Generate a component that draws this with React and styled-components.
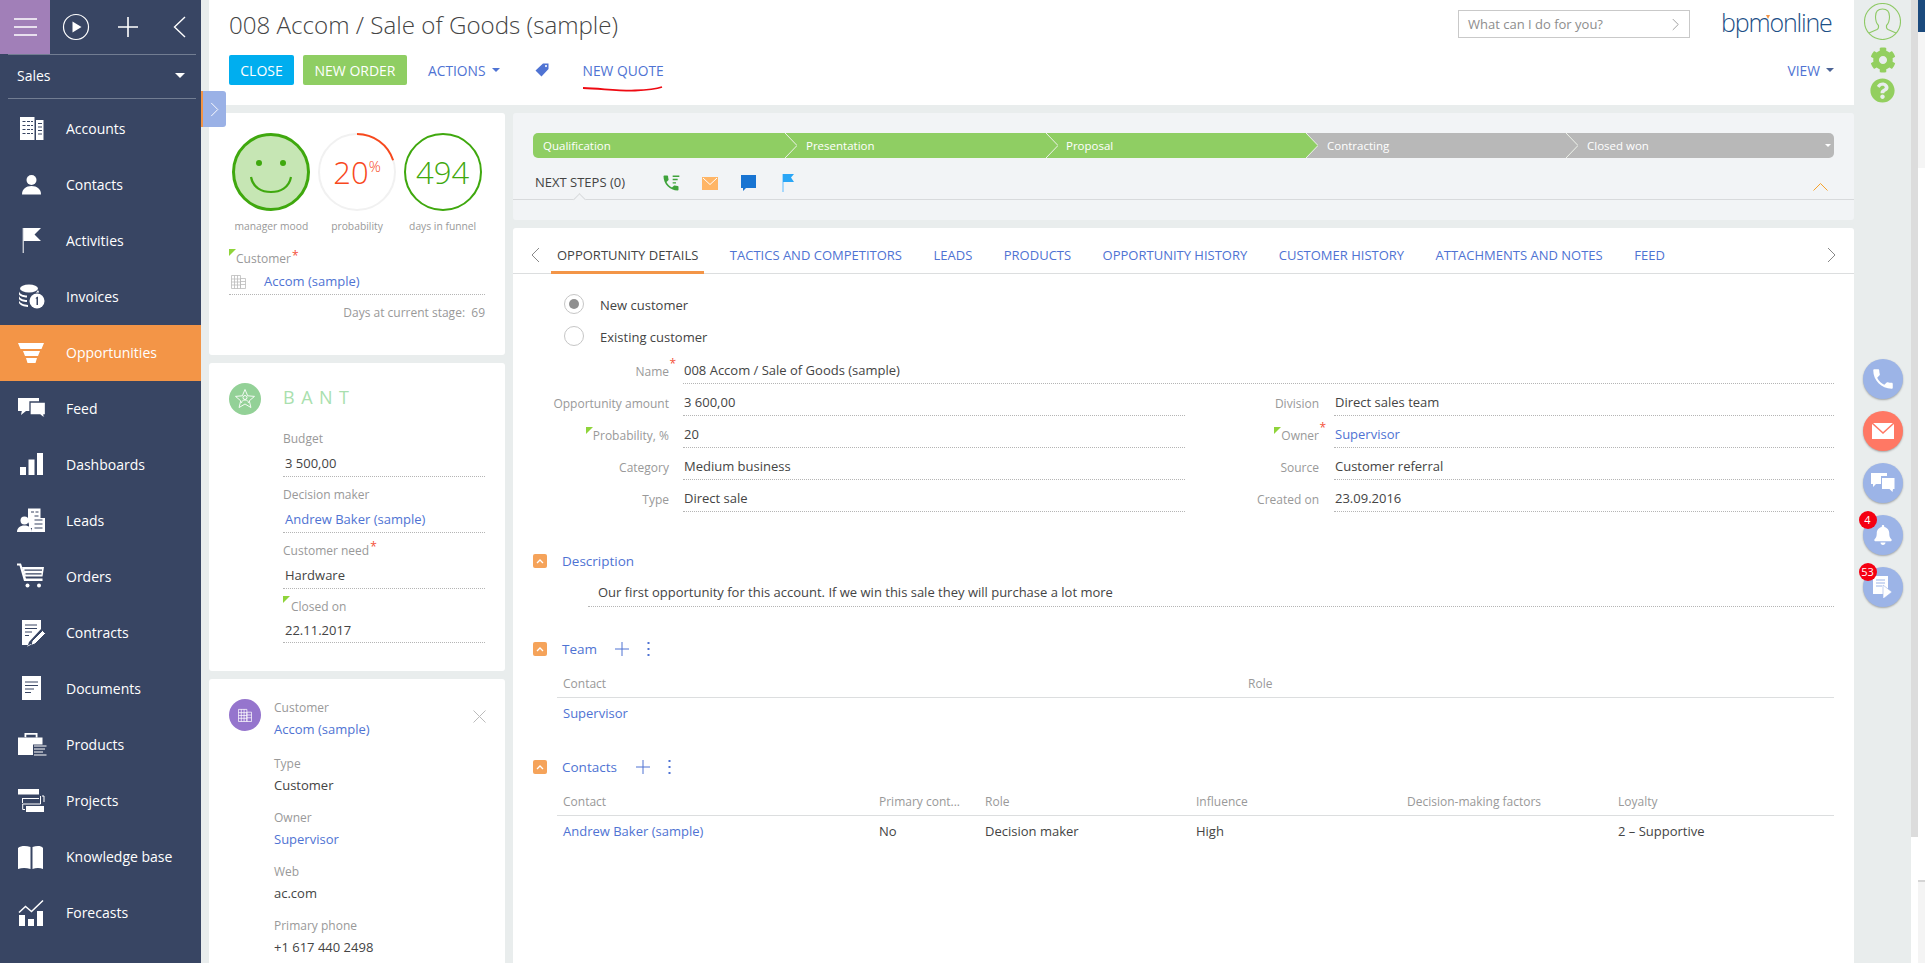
import React from "react";
import styled, { createGlobalStyle } from "styled-components";
import { FaCog, FaQuestionCircle, FaBell } from "react-icons/fa";

const Global = createGlobalStyle`
  html, body { margin: 0; padding: 0; background: #fff; overflow: hidden; }
  * { box-sizing: border-box; }
  body { font-family: "Open Sans", "Liberation Sans", sans-serif; font-size: 13px; color: #444; }
`;

const NAVY = "#384563";
const LINK = "#4f73d3";
const LABEL = "#999";
const DOTS = "1px dotted #b5b5b5";

const Page = styled.div`
  position: relative; display: flex; width: 1925px; height: 963px; overflow: hidden; background: #e9eded;
`;

/* ---------- sidebar ---------- */
const Sidebar = styled.aside`
  width: 201px; flex: none; background: ${NAVY}; color: #fff; display: flex; flex-direction: column;
`;
const TopTools = styled.div`
  height: 54px; display: flex; align-items: center;
`;
const MenuButton = styled.div`
  width: 50px; height: 54px; background: #a17fb8; display: flex; align-items: center; justify-content: center;
`;
const ToolIcons = styled.div`
  flex: 1; display: flex; align-items: center; padding-left: 12px;
`;
const PlusTool = styled.svg`
  margin: 0 35px 0 28px;
`;
const SectionSelect = styled.div`
  margin: 0 5px 0 8px; height: 45px; border-top: 1px solid #727d92; border-bottom: 1px solid #727d92;
  display: flex; align-items: center; justify-content: space-between; padding: 0 11px 2px 9px;
  font-size: 14px;
`;
const Caret = styled.span`
  display: inline-block; width: 0; height: 0;
  border-left: ${p => p.$s || 4}px solid transparent;
  border-right: ${p => p.$s || 4}px solid transparent;
  border-top: ${p => p.$s || 4}px solid ${p => p.$c || "#fff"};
`;
const Nav = styled.nav`
  margin-top: 2px;
`;
const NavItem = styled.div`
  height: 56px; display: flex; align-items: center; padding: 0 0 2px 17px; gap: 19px;
  font-size: 14px; background: ${p => (p.$active ? "#f39547" : "transparent")};
`;

const W = ({ children }) => (
  <svg width="30" height="30" viewBox="0 0 30 30" fill="#fff">{children}</svg>
);
const D = NAVY;
const navItems = [
  ["Accounts", <W><path d="M3 4h14.500v23H3z" /><path d="M19 7h7.500v20H19z" />
    <path d="M5.500 8.500h3M10 8.500h3M14 8.500h2M5.500 12.500h3M10 12.500h3M14 12.500h2M5.500 16.500h3M10 16.500h3M14 16.500h2M5.500 20.500h3M10 20.500h3M14 20.500h2M21 10.500h4M21 14h4M21 17.500h4M21 21h4" stroke={D} strokeWidth="1.200" /></W>],
  ["Contacts", <W><circle cx="14.500" cy="11" r="5" /><path d="M5 25.500c0-5.500 4-8.500 9.500-8.500S24 20 24 25.500z" /></W>],
  ["Activities", <W><path d="M5.700 3h1v25h-1z" /><path d="M6.500 3H24l-6.500 6.500L24 16H6.500z" /></W>],
  ["Invoices", <W><ellipse cx="12" cy="7.500" rx="9" ry="4" /><path d="M2 10.500c1 3 5 4 8 4v2c-3 0-7-1-8-3zM2 15c1 3 5 4 8 4v2c-3 0-7-1-8-3zM2 19.500c1 3 5 4 9 4.500v2c-4-.5-8-1.500-9-4zM21 9c.5 1 1 1.500 1 2.500-1 0-2 0-3 .5z" />
    <circle cx="20" cy="20" r="7.500" /><path d="M19 16.500l2-1v8.500h-1.500v-6.500l-.8.4z" fill={D} /></W>],
  ["Opportunities", <W><path d="M1 6h26l-2.500 6h-21zM6 14h17l-2 5H8zM9 21h11l-1.500 5h-8z" /></W>],
  ["Feed", <W><path d="M1 5h21v13H9l-5 4 .8-4H1z" /><path d="M13 9h15.500v13H27l.5 3.500-4.500-3.500H13z" stroke={D} strokeWidth="1.300" /></W>],
  ["Dashboards", <W><path d="M3 18h6v8H3zM11.500 10.500h6V26h-6zM20 4h6v22h-6z" /></W>],
  ["Leads", <W><path d="M11 3.500h12.500V13H28V27H15v-4h-3v-3a5 5 0 0 0-1-3z" /><path d="M14 7h3M18.500 7h3M17.500 11h4M17.500 15h8M17.500 19h8M17.500 23h8" stroke={D} strokeWidth="1.200" /><circle cx="7.500" cy="15.500" r="4" /><path d="M0 27c0-4 3-6.500 7.500-6.500S15 23 15 27z" /></W>],
  ["Orders", <W><path d="M0 2.500h4l5 15h16.500V20H7L2.500 4.500H0z" /><path d="M5 6h22l-1.500 9.500H8z" /><path d="M7.500 8.500h17.500v1.200H7.500zM8.500 12.200h16v1.200h-16z" fill={D} /><circle cx="10.500" cy="24.500" r="2" /><circle cx="22" cy="24.500" r="2" /></W>],
  ["Contracts", <W><path d="M5 3h19v9L12 25l-1 3H5z" /><path d="M8 8h12M8 11.500h12M8 15h7M8 18.500h4" stroke={D} strokeWidth="1.200" /><path d="M15 24l10.500-10.500 3 3L18 27l-4 1.500z" stroke={D} strokeWidth="1" /><path d="M10 29l4-2 .5.500-4 2z" /></W>],
  ["Documents", <W><path d="M5 3h19v24H5z" /><path d="M8 9h13M8 12.500h13M8 16h9M8 19.500h6" stroke={D} strokeWidth="1.200" /></W>],
  ["Products", <W><path d="M1 8.500h24.500v7H16V26H1z" /><path d="M7.500 8V4h13v4.500h-1.800V5.800H9.300v2.700z" /><path d="M17 17h12.500M17 20h11M17 23h9M17 26h12.500" stroke="#fff" strokeWidth="1" /></W>],
  ["Projects", <W><path d="M1 4h21v5.500H1zM9 21h18v6H9z" /><path d="M23.500 11v8H5.700v5.500H8M25 11h2v6" fill="none" stroke="#fff" strokeWidth="1" /><path d="M5 13h17v1H6v4h-1z" /></W>],
  ["Knowledge base", <W><path d="M1 7c3-2.500 8-2.500 12.500-1v22C9 26.500 5 26.500 1 28zM15.500 6C20 4.500 24 4.500 26 7v21c-3-1.500-7-1.500-10.500 0z" /></W>],
  ["Forecasts", <W><path d="M2 18h6v11H2zM11 22h6v7h-6zM20 14h6v15h-6z" /><path d="M2 15.500l6.500-6 6 5L26 3.500" fill="none" stroke="#fff" strokeWidth="1.500" /></W>],
];

/* ---------- main ---------- */
const Main = styled.main`
  flex: 1; min-width: 0; padding-left: 8px; display: flex; flex-direction: column;
`;
const Header = styled.header`
  height: 105px; flex: none; background: #fff; padding: 0 20px;
`;
const HeaderTop = styled.div`
  height: 55px; display: flex; align-items: flex-start;
`;
const Title = styled.h1`
  flex: 1; margin: 10px 0 0; font-size: 24.150px; line-height: 30px; font-weight: 300; color: #444;
  white-space: nowrap;
`;
const Search = styled.div`
  width: 232px; height: 28px; margin-top: 10px; border: 1px solid #c9c9c9; padding: 0 10px 0 9px;
  display: flex; align-items: center; justify-content: space-between; color: #8d8d8d; font-size: 13px;
`;
const Logo = styled.div`
  position: relative; margin: 7px 3px 0 31px; width: 110px; font-size: 25px; line-height: 30px; font-weight: 300; color: #1c4f86;
  letter-spacing: -1.150px; white-space: nowrap;
`;
const LogoMark = styled.span`
  position: absolute; left: 45px; top: 8px; width: 0; height: 0;
  border-left: 2px solid transparent; border-right: 2px solid transparent; border-top: 4px solid #f39547;
`;
const Toolbar = styled.div`
  height: 30px; display: flex; align-items: center; font-size: 14px;
`;
const Btn = styled.div`
  height: 30px; width: ${p => p.$w}px; margin-right: 9px; background: ${p => p.$bg}; color: #fff; border-radius: 2px;
  display: flex; align-items: center; justify-content: center;
`;
const ToolLink = styled.div`
  position: relative; display: flex; align-items: center; gap: 6px; color: ${LINK}; font-size: 13.800px; margin-left: ${p => p.$ml || 0}px;
`;
const Scribble = styled.svg`
  position: absolute; left: 0; top: 25px;
`;

const Content = styled.div`
  flex: 1; min-height: 0; padding-top: 8px; display: grid; grid-template-columns: 296px 1fr; gap: 8px;
`;
const LeftCol = styled.div`
  display: flex; flex-direction: column; gap: 8px; min-height: 0;
`;
const RightCol = styled.div`
  display: flex; flex-direction: column; gap: 8px; min-height: 0;
`;
const Card = styled.section`
  position: relative; background: #fff; border-radius: 3px; padding: 20px; height: ${p => p.$h ? `${p.$h}px` : "auto"};
  flex: ${p => p.$h ? "none" : 1};
`;
const Gauges = styled.div`
  display: grid; grid-template-columns: repeat(3, 1fr); margin: 0 -0.5px;
`;
const Gauge = styled.div`
  display: flex; flex-direction: column; align-items: center;
`;
const Ring = styled.div`
  position: relative; width: 78px; height: 78px; border-radius: 50%; display: flex; align-items: center; justify-content: center;
  border: ${p => p.$b}; background: ${p => p.$bg || "transparent"}; color: ${p => p.$c}; font-size: 31px; font-weight: 300;
`;
const GaugeLabel = styled.div`
  margin-top: 7px; font-size: 10.300px; line-height: 16px; color: ${LABEL}; white-space: nowrap;
`;
const ArcSvg = styled.svg`
  position: absolute; left: -2px; top: -2px;
`;
const Pct = styled.sup`
  font-size: 15px; line-height: 0; position: relative; vertical-align: baseline; top: -12px;
`;
const Flagged = styled.span`
  position: relative; padding-left: ${p => p.$pl || 0}px; display: inline-block;
  ${p => p.$corner && `&::before { content: ""; position: absolute; left: ${p.$cl ?? 0}px; top: ${p.$ct ?? 0}px; width: 0; height: 0; border-top: 7px solid #8fd43a; border-right: 7px solid transparent; }`}
`;
const Req = styled.span`
  color: #f4513a; font-size: 12px; vertical-align: top; margin-left: 1px; line-height: 14px;
`;
const FieldReq = styled.span`
  position: absolute; right: -6px; top: 4px; color: #f4513a; font-size: 12px; line-height: 16px;
`;
const SmallLabel = styled.div`
  font-size: 12px; padding-top: ${p => (p.$flat ? 0 : 2)}px; line-height: ${p => (p.$lh || 20) - (p.$flat ? 0 : 2)}px; color: ${LABEL}; white-space: nowrap;
`;
const CustomerLabel = styled(SmallLabel)`
  margin-top: 15px;
`;
const CustomerLink = styled.div`
  height: 26px; border-bottom: ${DOTS}; display: flex; align-items: center; color: ${LINK}; font-size: 13px; padding: 0 2px 1px 2px; gap: 18px;
`;
const Days = styled.div`
  margin-top: 8px; line-height: 20px; text-align: right; color: ${LABEL}; font-size: 12px;
`;
const BantHead = styled.div`
  display: flex; gap: 22px; height: 43px;
`;
const RoundIcon = styled.div`
  width: 32px; height: 32px; flex: none; border-radius: 50%; background: ${p => p.$bg}; display: flex; align-items: center; justify-content: center;
`;
const BantTitle = styled.div`
  font-size: 18px; line-height: 28px; letter-spacing: 6.500px; color: #a9dfae;
`;
const FieldStack = styled.div`
  margin-left: 54px;
`;
const StackValue = styled.div`
  height: ${p => p.$h || 27}px; line-height: ${p => (p.$h ? p.$h - 1 : 26)}px; margin-bottom: 5px; padding-left: 2px; border-bottom: ${DOTS};
  color: ${p => (p.$link ? LINK : "#444")}; font-size: 13px;
`;
const Close = styled.svg`
  position: absolute; right: 19px; top: 31px;
`;
const ContactHead = styled.div`
  display: flex; gap: 13px;
`;
const ContactCol = styled.div`
  margin-top: -2px;
`;
const PlainValue = styled.div`
  line-height: ${p => p.$lh || 24}px; margin-bottom: ${p => p.$mb ?? 10}px; color: ${p => (p.$link ? LINK : "#444")}; font-size: 13px; white-space: nowrap;
`;
const ContactFields = styled.div`
  margin: 12px 0 0 45px;
`;

/* ---------- stage panel ---------- */
const StagePanel = styled.section`
  flex: none; height: 107px; background: #f2f4f6; border-radius: 3px; padding-top: 20px;
`;
const StageBar = styled.div`
  margin: 0 20px; height: 25px; display: flex;
`;
const Stage = styled.div`
  position: relative; width: ${p => p.$w}px; padding-left: ${p => p.$pl}px; background: ${p => (p.$on ? "#8fce63" : "#b8b8b8")};
  color: #fff; font-size: 11.500px; line-height: 25px;
  border-radius: ${p => (p.$first ? "5px 0 0 5px" : p.$last ? "0 5px 5px 0" : "0")};
`;
const StageTip = styled.svg`
  position: absolute; right: -12px; top: 0; z-index: 1;
`;
const StageCaret = styled.span`
  position: absolute; right: 3px; top: 11px; display: flex;
`;
const NextSteps = styled.div`
  position: relative; height: 42px; padding: 7px 26px 0 22px; border-bottom: 1px solid #d8dadc; display: flex; align-items: center; font-size: 13px; color: #444;
  &::before { content: ""; position: absolute; left: 62px; bottom: -5px; width: 8px; height: 8px; background: #f2f4f6; border-top: 1px solid #d8dadc; border-left: 1px solid #d8dadc; transform: rotate(45deg); }
`;
const StepIcons = styled.div`
  display: flex; align-items: center; margin: 2px 0 0 26px;
`;
const StepIcon = styled.span`
  width: 39px; display: flex; justify-content: center;
`;
const CollapseUp = styled.svg`
  margin-left: auto; margin-top: 8px;
`;

/* ---------- detail panel ---------- */
const Details = styled.section`
  flex: 1; min-height: 0; background: #fff; border-radius: 3px 3px 0 0;
`;
const Tabs = styled.div`
  height: 46px; display: flex; align-items: stretch; border-bottom: 1px solid #dcdedf; padding: 0 18px; font-size: 13px;
`;
const TabArrow = styled.div`
  display: flex; align-items: center; padding-top: 8px; margin: ${p => p.$right ? "0 0 0 auto" : "0 11px 0 0"};
`;
const Tab = styled.div`
  display: flex; align-items: center; padding: 11px 6px 0; margin-right: 19.500px; white-space: nowrap; margin-bottom: -1px;
  color: ${p => (p.$active ? "#444" : LINK)};
  border-bottom: 3px solid ${p => (p.$active ? "#f39547" : "transparent")};
`;
const Body = styled.div`
  padding: 14px 20px 0;
`;
const RadioRow = styled.div`
  height: 32px; display: flex; align-items: center; padding-left: 31px; gap: 16px; color: #444;
`;
const RadioText = styled.span`
  padding-top: 2px;
`;
const Radio = styled.span`
  width: 20px; height: 20px; border: 1px solid #c6c6c6; border-radius: 50%; display: flex; align-items: center; justify-content: center; background: #fff;
  &::after { content: ""; width: 10px; height: 10px; border-radius: 50%; background: ${p => (p.$on ? "#8f8f8f" : "transparent")}; }
`;
const FormGrid = styled.div`
  display: grid; grid-template-columns: 652px 649px;
`;
const Field = styled.div`
  grid-column: ${p => (p.$wide ? "1 / -1" : "auto")}; display: grid; height: 32px;
  grid-template-columns: ${p => (p.$right ? "135px 500px" : p.$wide ? "137px 1151px" : "137px 502px")};
  column-gap: ${p => (p.$right ? 14 : 13)}px;
`;
const FieldLabel = styled.div`
  position: relative; padding: 8px 1px 0 0; line-height: 24px; font-size: 12px; text-align: right; color: ${LABEL}; white-space: nowrap;
`;
const FieldValue = styled.div`
  padding: 6px 0 0 1px; line-height: 25px; border-bottom: ${DOTS}; color: ${p => (p.$link ? LINK : "#444")}; white-space: nowrap;
`;
const SectionHead = styled.div`
  height: 20px; margin-top: ${p => p.$mt}px; display: flex; align-items: center; color: ${LINK}; font-size: 13.500px;
`;
const Toggle = styled.span`
  width: 14px; height: 14px; margin-right: 15px; background: #f5a35a; border-radius: 2px; display: flex; align-items: center; justify-content: center; flex: none;
`;
const HeadTools = styled.span`
  display: flex; align-items: center; gap: 18px; margin-left: ${p => p.$ml}px;
`;
const Description = styled.div`
  margin: 8px 0 0 55px; height: 28px; line-height: 27px; padding-left: 10px; border-bottom: ${DOTS}; color: #444;
`;
const TableHead = styled.div`
  margin: 12px 0 0 24px; display: grid; grid-template-columns: ${p => p.$cols}; height: 27px; border-bottom: 1px solid #dcdedf; line-height: 26px; color: ${LABEL}; font-size: 12px;
`;
const TableRow = styled.div`
  margin-left: 24px; display: grid; grid-template-columns: ${p => p.$cols}; height: 30px; line-height: 30px; color: #444;
`;
const Cell = styled.div`
  padding-left: 6px; white-space: nowrap; color: ${p => (p.$link ? LINK : "inherit")};
`;

/* ---------- right rail ---------- */
const Rail = styled.aside`
  width: 57px; flex: none; display: flex; flex-direction: column; align-items: center; color: #93cf5f;
`;
const Avatar = styled.svg`
  margin-top: 3px;
`;
const GearWrap = styled.div`
  margin-top: 7px; height: 26px; display: flex;
`;
const HelpWrap = styled.div`
  margin-top: 5px; height: 25px; display: flex;
`;
const SideButtons = styled.div`
  margin-top: 256px; display: flex; flex-direction: column; gap: 12px;
`;
const SideBtn = styled.div`
  position: relative; width: 40px; height: 40px; border-radius: 50%; background: ${p => p.$bg || "#9cb4e7"}; color: #fff;
  box-shadow: 0 1px 2px rgba(0,0,0,.3); display: flex; align-items: center; justify-content: center;
`;
const Badge = styled.span`
  position: absolute; left: -4px; top: -4px; width: 18px; height: 18px; border-radius: 50%; background: #f50012; color: #fff;
  font-size: 11px; line-height: 18px; text-align: center;
`;
const ScrollTrack = styled.div`
  width: 7px; flex: none; background: #fff;
`;
const ScrollThumb = styled.div`
  height: 837px; background: #dcdcdc;
`;
const EdgeStrip = styled.div`
  width: 7px; flex: none; display: flex; flex-direction: column;
`;
const EdgePiece = styled.div`
  height: ${p => (p.$h ? `${p.$h}px` : "auto")}; flex: ${p => (p.$h ? "none" : 1)}; background: ${p => p.$bg};
  ${p => p.$line && "border-top: 2px solid #d5d5d5;"}
`;
const CollapseTab = styled.div`
  position: absolute; left: 201px; top: 91px; width: 25px; height: 36px; background: #9ab1e6; border-left: 2px solid #f39547; border-radius: 0 3px 3px 0;
  display: flex; align-items: center; justify-content: center;
`;

/* small icons */
const Chev = ({ dir = "right", c = "#888", w = 9, h = 16, sw = 1 }) => (
  <svg width={w} height={h} viewBox="0 0 9 16" fill="none" stroke={c} strokeWidth={sw}>
    <path d={dir === "right" ? "M1 1l7 7-7 7" : "M8 1L1 8l7 7"} />
  </svg>
);
const PHONE = "M6.620 10.790c1.440 2.830 3.760 5.140 6.590 6.590l2.200-2.200c.27-.27.67-.36 1.020-.24 1.120.37 2.330.57 3.570.57.55 0 1 .45 1 1V20c0 .55-.45 1-1 1-9.390 0-17-7.610-17-17 0-.55.45-1 1-1h3.500c.55 0 1 .45 1 1 0 1.250.2 2.450.57 3.570.11.35.03.74-.25 1.020l-2.200 2.200z";
const Building = ({ c = "#bbb", s = 15 }) => (
  <svg width={s} height={s} viewBox="0 0 15 15" fill="none" stroke={c} strokeWidth=".8">
    <path d="M.5 1.500h9v13h-9zM9.500 4.500h5v10h-5zM.5 5h9M.5 8h9M.5 11h9M3.500 1.500v13M6.500 1.500v13M9.500 7.500h5M9.500 10.500h5" />
  </svg>
);
const Plus = ({ s = 14, c = LINK }) => (
  <svg width={s} height={s} viewBox="0 0 14 14" stroke={c} strokeWidth="1"><path d="M7 0v14M0 7h14" /></svg>
);
const Dots = () => (
  <svg width="3" height="14" viewBox="0 0 3 14" fill={LINK}><rect x=".5" y="0" width="2" height="2" /><rect x=".5" y="6" width="2" height="2" /><rect x=".5" y="12" width="2" height="2" /></svg>
);
const UpWhite = () => (
  <svg width="8" height="6" viewBox="0 0 8 6" fill="none" stroke="#fff" strokeWidth="1.300"><path d="M1 5l3-3 3 3" /></svg>
);

const stages = [
  ["Qualification", 252, 10, true],
  ["Presentation", 261, 21, true],
  ["Proposal", 260, 20, true],
  ["Contracting", 260, 21, false],
  ["Closed won", 268, 21, false],
];
const tabs = ["OPPORTUNITY DETAILS", "TACTICS AND COMPETITORS", "LEADS", "PRODUCTS", "OPPORTUNITY HISTORY", "CUSTOMER HISTORY", "ATTACHMENTS AND NOTES", "FEED"];
const CONTACT_COLS = "316px 106px 211px 211px 211px 222px";

export default function App() {
  return (
    <Page>
      <Global />
      <Sidebar>
        <TopTools>
          <MenuButton>
            <svg width="23" height="18" viewBox="0 0 23 18" stroke="#fff" strokeWidth="1.500"><path d="M0 1h23M0 9h23M0 17h23" /></svg>
          </MenuButton>
          <ToolIcons>
            <svg width="28" height="28" viewBox="0 0 28 28" fill="none" stroke="#fff" strokeWidth="1.200"><circle cx="14" cy="14" r="12.500" /><path d="M10.500 8.500l9 5.500-9 5.500z" fill="#fff" stroke="none" /></svg>
            <PlusTool width="20" height="20" viewBox="0 0 20 20" stroke="#fff" strokeWidth="1.600"><path d="M10 0v20M0 10h20" /></PlusTool>
            <svg width="13" height="22" viewBox="0 0 13 22" fill="none" stroke="#fff" strokeWidth="1.400"><path d="M12 1L1.500 11 12 21" /></svg>
          </ToolIcons>
        </TopTools>
        <SectionSelect>Sales<Caret $s={5} /></SectionSelect>
        <Nav>
          {navItems.map(([name, icon]) => (
            <NavItem key={name} $active={name === "Opportunities"}>{icon}<span>{name}</span></NavItem>
          ))}
        </Nav>
      </Sidebar>

      <Main>
        <Header>
          <HeaderTop>
            <Title>008 Accom / Sale of Goods (sample)</Title>
            <Search>What can I do for you?<Chev c="#888" w={7} h={13} /></Search>
            <Logo>bpmonline<LogoMark /></Logo>
          </HeaderTop>
          <Toolbar>
            <Btn $w={65} $bg="#00aeef">CLOSE</Btn>
            <Btn $w={104} $bg="#8fce63">NEW ORDER</Btn>
            <ToolLink $ml={12}>ACTIONS<Caret $c={LINK} /></ToolLink>
            <ToolLink $ml={35}>
              <svg width="14" height="14" viewBox="0 0 14 14" fill={LINK}><path d="M8 .5h5.500V6l-7 7.500L.5 7.500zM11 2a1 1 0 1 0 .01 0z" fillRule="evenodd" /></svg>
            </ToolLink>
            <ToolLink $ml={34}>
              NEW QUOTE
              <Scribble width="80" height="6" viewBox="0 0 80 6" fill="none" stroke="#ee0a12" strokeWidth="1.800"><path d="M0 2C18 2.500 35 5 52 4.500 63 4 73 3 79 1" /></Scribble>
            </ToolLink>
            <ToolLink style={{ marginLeft: "auto" }}>VIEW<Caret $c="#4c6496" /></ToolLink>
          </Toolbar>
        </Header>

        <Content>
          <LeftCol>
            <Card $h={242}>
              <Gauges>
                <Gauge>
                  <Ring $b="3px solid #3fa80e" $bg="#c6e6b4">
                    <svg width="72" height="72" viewBox="0 0 72 72" fill="none" stroke="#3fa80e" strokeWidth="2.200">
                      <circle cx="24" cy="27" r="3" fill="#3fa80e" stroke="none" /><circle cx="48" cy="27" r="3" fill="#3fa80e" stroke="none" />
                      <path d="M16 41c2 11 11 15 20 15s18-4 20-15" />
                    </svg>
                  </Ring>
                  <GaugeLabel>manager mood</GaugeLabel>
                </Gauge>
                <Gauge>
                  <Ring $b="2px solid #f1f1f1" $c="#f8481c">
                    <ArcSvg width="78" height="78" viewBox="0 0 78 78" fill="none" stroke="#f8481c" strokeWidth="2"><path d="M39 1A38 38 0 0 1 75.100 27.300" /></ArcSvg>
                    <span>20<Pct>%</Pct></span>
                  </Ring>
                  <GaugeLabel>probability</GaugeLabel>
                </Gauge>
                <Gauge>
                  <Ring $b="2px solid #3fa80e" $c="#3fa80e">494</Ring>
                  <GaugeLabel>days in funnel</GaugeLabel>
                </Gauge>
              </Gauges>
              <CustomerLabel $flat><Flagged $corner $pl={7}>Customer<Req>*</Req></Flagged></CustomerLabel>
              <CustomerLink><Building />Accom (sample)</CustomerLink>
              <Days>Days at current stage:&nbsp; 69</Days>
            </Card>

            <Card $h={308}>
              <BantHead>
                <RoundIcon $bg="#93d197">
                  <svg width="22" height="22" viewBox="0 0 22 22" fill="none" stroke="#fff" strokeWidth=".9"><path d="M11 1.500l2.700 6.300 6.800.6-5.200 4.400 1.600 6.700-5.900-3.500-5.900 3.500 1.600-6.700L1.500 8.400l6.800-.6z" /><circle cx="11" cy="9.500" r="2" /><path d="M7.500 15c0-2 1.500-3 3.500-3s3.500 1 3.500 3" /></svg>
                </RoundIcon>
                <BantTitle>BANT</BantTitle>
              </BantHead>
              <FieldStack>
                <SmallLabel $lh={24}>Budget</SmallLabel>
                <StackValue>3 500,00</StackValue>
                <SmallLabel $lh={24}>Decision maker</SmallLabel>
                <StackValue $link>Andrew Baker (sample)</StackValue>
                <SmallLabel $lh={24}>Customer need<Req>*</Req></SmallLabel>
                <StackValue>Hardware</StackValue>
                <SmallLabel $lh={24}><Flagged $corner $pl={8} $ct={0}>Closed on</Flagged></SmallLabel>
                <StackValue $h={25}>22.11.2017</StackValue>
              </FieldStack>
            </Card>

            <Card>
              <Close width="13" height="13" viewBox="0 0 13 13" stroke="#bbb" strokeWidth="1"><path d="M.5.5l12 12M12.500.5l-12 12" /></Close>
              <ContactHead>
                <RoundIcon $bg="#9575cd"><Building c="#fff" s={14} /></RoundIcon>
                <ContactCol>
                  <SmallLabel>Customer</SmallLabel>
                  <PlainValue $link $mb={0}>Accom (sample)</PlainValue>
                </ContactCol>
              </ContactHead>
              <ContactFields>
                <SmallLabel>Type</SmallLabel><PlainValue>Customer</PlainValue>
                <SmallLabel>Owner</SmallLabel><PlainValue $link>Supervisor</PlainValue>
                <SmallLabel>Web</SmallLabel><PlainValue>ac.com</PlainValue>
                <SmallLabel>Primary phone</SmallLabel><PlainValue>+1 617 440 2498</PlainValue>
              </ContactFields>
            </Card>
          </LeftCol>

          <RightCol>
            <StagePanel>
              <StageBar>
                {stages.map(([name, w, pl, on], i) => (
                  <Stage key={name} $w={w} $pl={pl} $on={on} $first={i === 0} $last={i === stages.length - 1}>
                    {name}
                    {i < stages.length - 1 && (
                      <StageTip width="12" height="25" viewBox="0 0 12 25">
                        <path d="M0 0l12 12.500L0 25z" fill={on ? "#8fce63" : "#b8b8b8"} />
                        <path d="M0 0l12 12.500L0 25" fill="none" stroke="#eef2ea" strokeWidth="1" />
                      </StageTip>
                    )}
                    {i === stages.length - 1 && <StageCaret><Caret $s={3} /></StageCaret>}
                  </Stage>
                ))}
              </StageBar>
              <NextSteps>
                NEXT STEPS (0)
                <StepIcons>
                  <StepIcon><svg width="20" height="20" viewBox="0 0 24 24" fill="#3fa33b"><path d={PHONE} /><path d="M14 3h8v1.700h-8zM14 7h6v1.700h-6zM14 11h4v1.700h-4z" /></svg></StepIcon>
                  <StepIcon><svg width="16" height="13" viewBox="0 0 16 13"><path d="M0 0h16v13H0z" fill="#ffb565" /><path d="M1 1l7 6.500L15 1" fill="none" stroke="#fff" strokeWidth="1" /></svg></StepIcon>
                  <StepIcon><svg width="15" height="16" viewBox="0 0 15 16" fill="#1874d2"><path d="M0 0h15v13H5l-3 3v-3H0z" /></svg></StepIcon>
                  <StepIcon><svg width="12" height="18" viewBox="0 0 12 18"><path d="M0 0h2v18H0z" fill="#a7d8fb" /><path d="M1 0h11l-3 3.500L12 8H1z" fill="#2aa6f6" /></svg></StepIcon>
                </StepIcons>
                <CollapseUp width="15" height="9" viewBox="0 0 15 9" fill="none" stroke="#f7a22b" strokeWidth="1"><path d="M.5 8.500l7-7 7 7" /></CollapseUp>
              </NextSteps>
            </StagePanel>

            <Details>
              <Tabs>
                <TabArrow><Chev dir="left" /></TabArrow>
                {tabs.map((t, i) => <Tab key={t} $active={i === 0}>{t}</Tab>)}
                <TabArrow $right><Chev /></TabArrow>
              </Tabs>
              <Body>
                <RadioRow><Radio $on /><RadioText>New customer</RadioText></RadioRow>
                <RadioRow><Radio /><RadioText>Existing customer</RadioText></RadioRow>
                <FormGrid>
                  <Field $wide>
                    <FieldLabel>Name<FieldReq>*</FieldReq></FieldLabel>
                    <FieldValue>008 Accom / Sale of Goods (sample)</FieldValue>
                  </Field>
                  <Field><FieldLabel>Opportunity amount</FieldLabel><FieldValue>3 600,00</FieldValue></Field>
                  <Field $right><FieldLabel>Division</FieldLabel><FieldValue>Direct sales team</FieldValue></Field>
                  <Field><FieldLabel><Flagged $corner $pl={7} $ct={3}>Probability, %</Flagged></FieldLabel><FieldValue>20</FieldValue></Field>
                  <Field $right><FieldLabel><Flagged $corner $pl={7} $ct={3}>Owner</Flagged><FieldReq>*</FieldReq></FieldLabel><FieldValue $link>Supervisor</FieldValue></Field>
                  <Field><FieldLabel>Category</FieldLabel><FieldValue>Medium business</FieldValue></Field>
                  <Field $right><FieldLabel>Source</FieldLabel><FieldValue>Customer referral</FieldValue></Field>
                  <Field><FieldLabel>Type</FieldLabel><FieldValue>Direct sale</FieldValue></Field>
                  <Field $right><FieldLabel>Created on</FieldLabel><FieldValue>23.09.2016</FieldValue></Field>
                </FormGrid>

                <SectionHead $mt={39}><Toggle><UpWhite /></Toggle>Description</SectionHead>
                <Description>Our first opportunity for this account. If we win this sale they will purchase a lot more</Description>

                <SectionHead $mt={32}>
                  <Toggle><UpWhite /></Toggle>Team
                  <HeadTools $ml={18}><Plus /><Dots /></HeadTools>
                </SectionHead>
                <TableHead $cols="685px 1fr"><Cell>Contact</Cell><Cell>Role</Cell></TableHead>
                <TableRow $cols="685px 1fr"><Cell $link>Supervisor</Cell><Cell /></TableRow>

                <SectionHead $mt={29}>
                  <Toggle><UpWhite /></Toggle>Contacts
                  <HeadTools $ml={19}><Plus /><Dots /></HeadTools>
                </SectionHead>
                <TableHead $cols={CONTACT_COLS}>
                  <Cell>Contact</Cell><Cell>Primary cont...</Cell><Cell>Role</Cell><Cell>Influence</Cell><Cell>Decision-making factors</Cell><Cell>Loyalty</Cell>
                </TableHead>
                <TableRow $cols={CONTACT_COLS}>
                  <Cell $link>Andrew Baker (sample)</Cell><Cell>No</Cell><Cell>Decision maker</Cell><Cell>High</Cell><Cell /><Cell>2 – Supportive</Cell>
                </TableRow>
              </Body>
            </Details>
          </RightCol>
        </Content>
      </Main>

      <Rail>
        <Avatar width="37" height="37" viewBox="0 0 37 37" fill="none" stroke="#8ec965" strokeWidth="1.100">
          <circle cx="18.500" cy="18.500" r="18" />
          <path d="M5 30l8-3.500c1.500-.8 1.800-2 1.500-4-2-2-3-5-3-9 0-5 3-7.500 7-7.500s7 2.500 7 7.500c0 4-1 7-3 9-.3 2 0 3.200 1.500 4l8 3.500" />
        </Avatar>
        <GearWrap><FaCog size={26} /></GearWrap>
        <HelpWrap><FaQuestionCircle size={25} /></HelpWrap>
        <SideButtons>
          <SideBtn><svg width="26" height="26" viewBox="0 0 24 24" fill="#fff"><path d={PHONE} /></svg></SideBtn>
          <SideBtn $bg="#ff7864"><svg width="22" height="16" viewBox="0 0 22 16"><path d="M0 0h22v16H0z" fill="#fff" /><path d="M0 0l11 10L22 0" fill="none" stroke="#ff7864" strokeWidth="1.500" /></svg></SideBtn>
          <SideBtn>
            <svg width="24" height="20" viewBox="0 0 24 20" fill="#fff"><path d="M0 0h16v3h-6v8H5l-3 3v-3H0z" /><path d="M11 5h12.500v11H22l-.5 3-3-3H11z" /></svg>
          </SideBtn>
          <SideBtn><FaBell size={20} /><Badge>4</Badge></SideBtn>
          <SideBtn>
            <svg width="20" height="22" viewBox="0 0 20 22" fill="#fff"><path d="M0 0h15v18H0z" /><path d="M3 4h9M3 7h9M3 10h6" stroke="#9cb4e7" strokeWidth="1" /><path d="M10 9l9 7-9 7z" stroke="#9cb4e7" strokeWidth=".6" /></svg>
            <Badge>53</Badge>
          </SideBtn>
        </SideButtons>
      </Rail>
      <ScrollTrack><ScrollThumb /></ScrollTrack>
      <EdgeStrip>
        <EdgePiece $h={32} $bg="#1b4a7d" />
        <EdgePiece $h={136} $bg="#f5f5f5" />
        <EdgePiece $h={712} $bg="#fff" />
        <EdgePiece $bg="#f4f4f4" $line />
      </EdgeStrip>

      <CollapseTab><Chev c="#fff" w={9} h={15} /></CollapseTab>
    </Page>
  );
}
